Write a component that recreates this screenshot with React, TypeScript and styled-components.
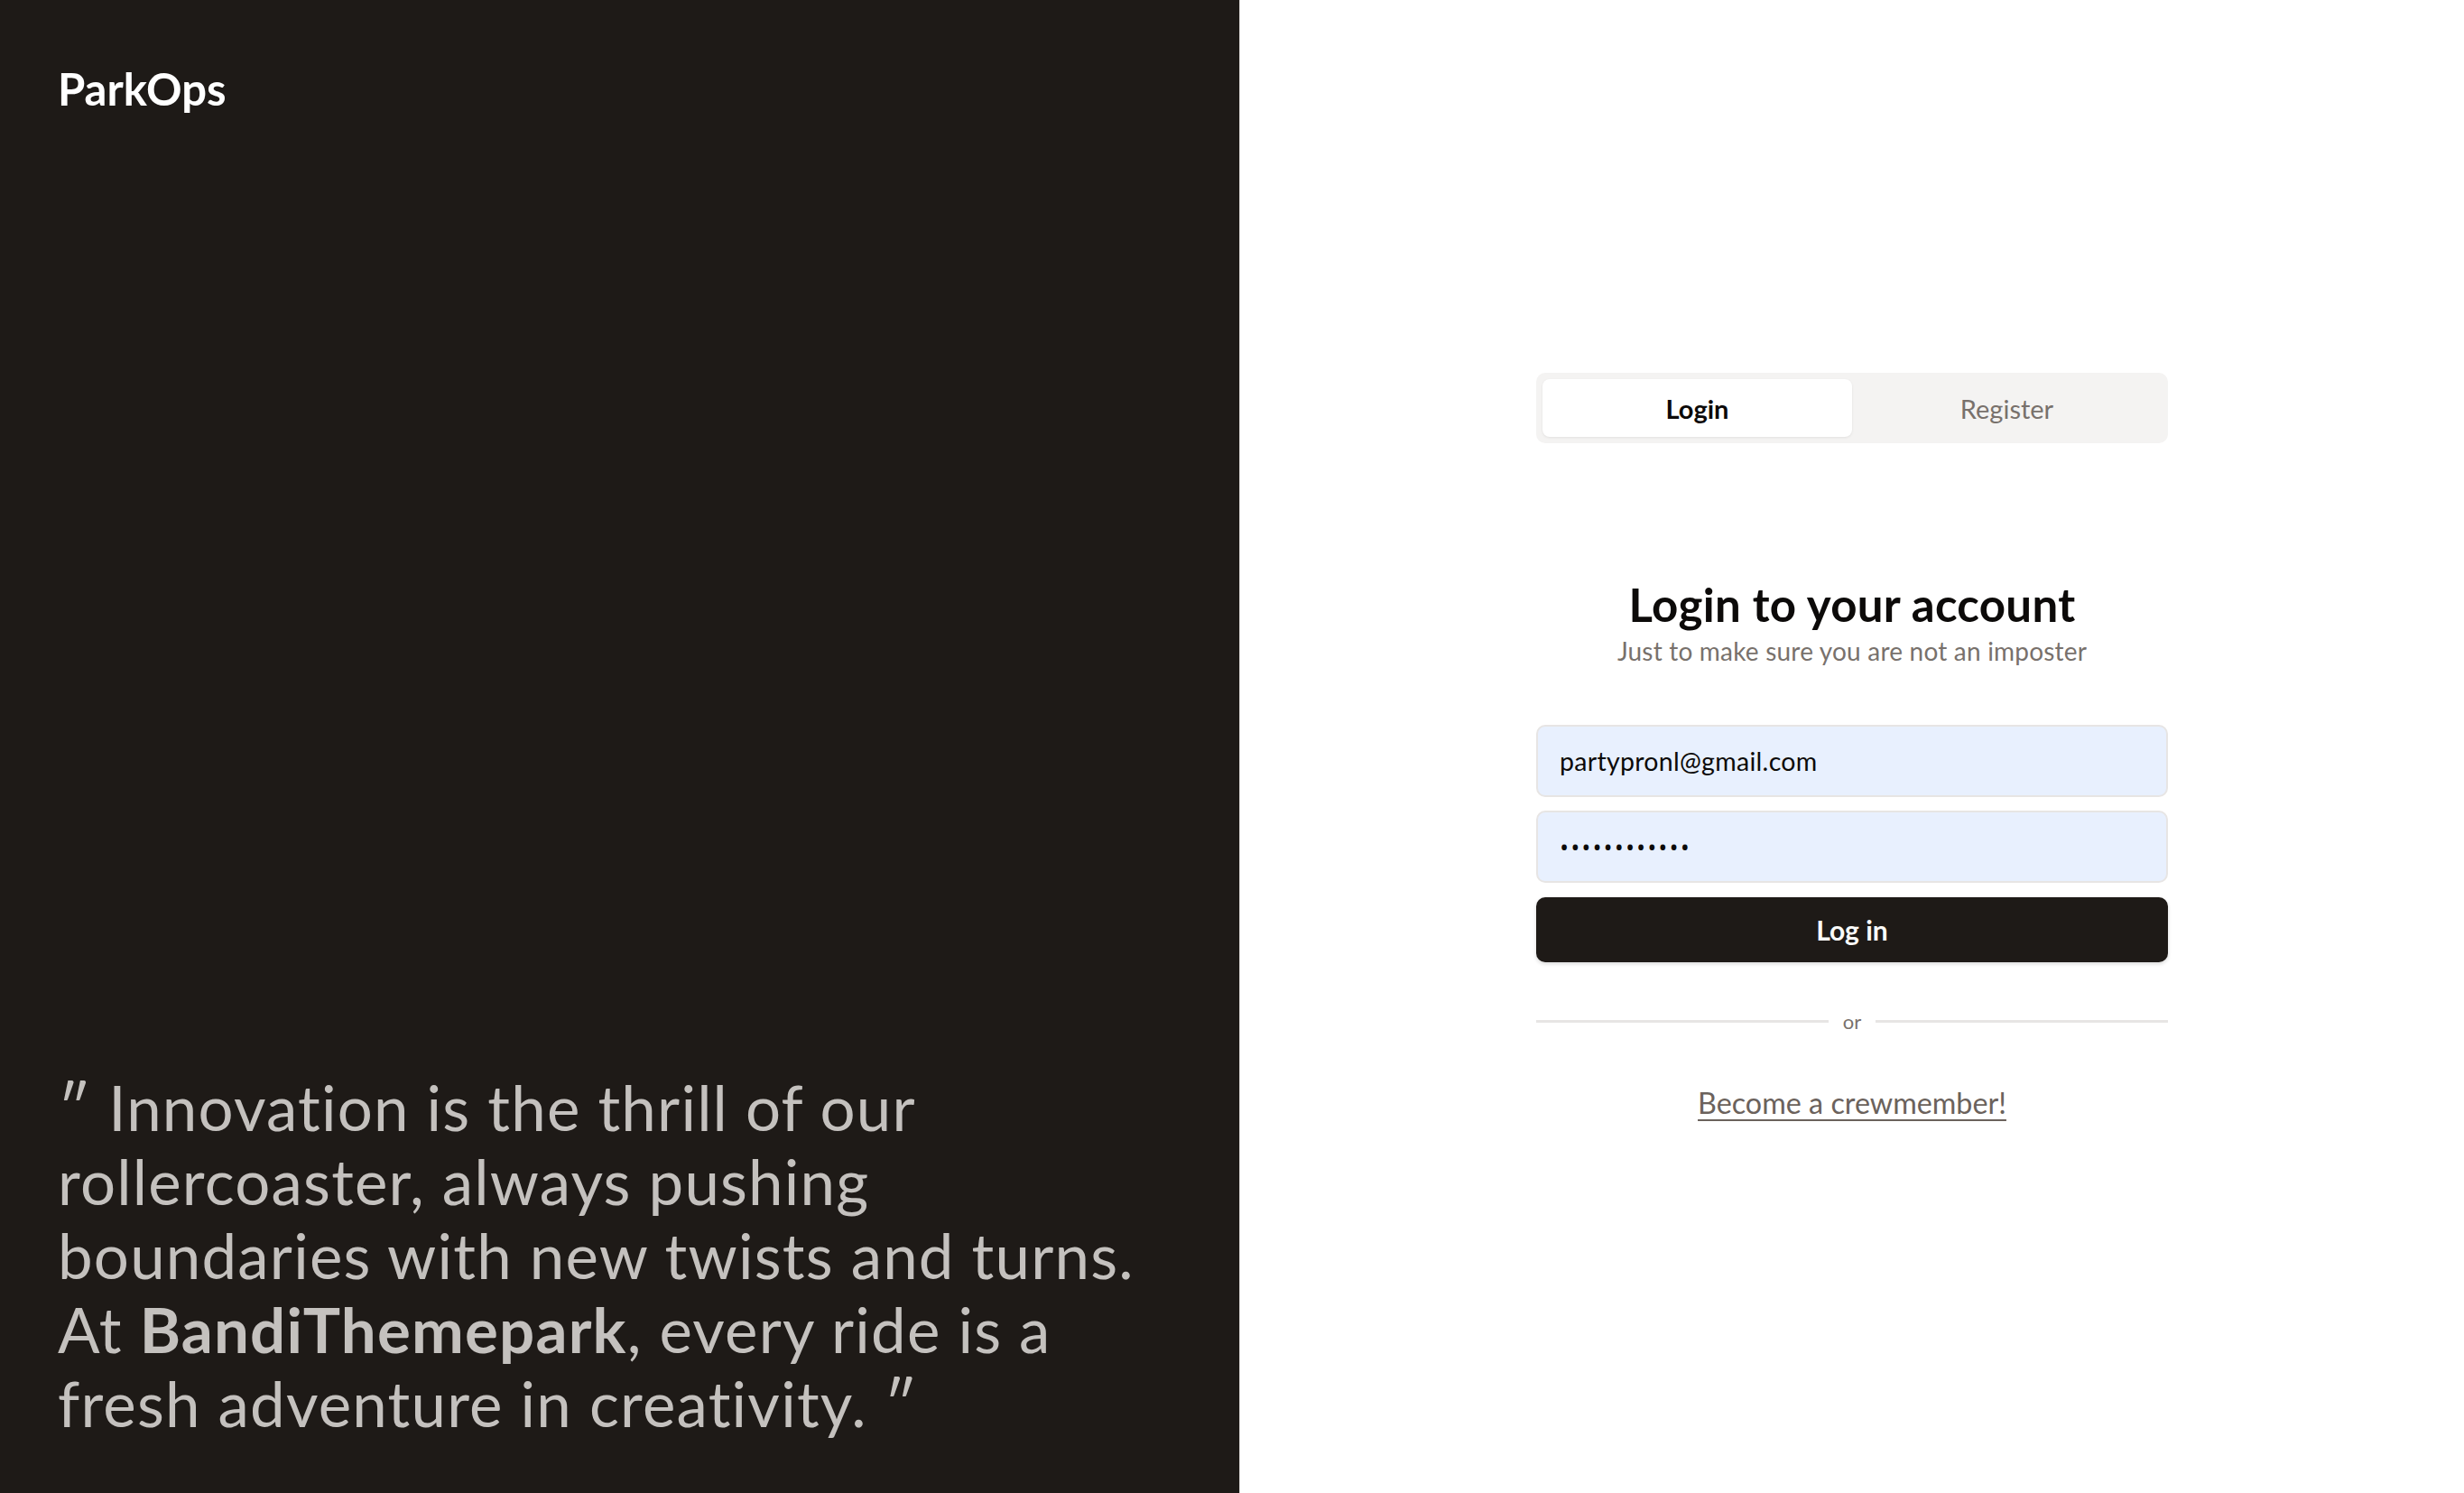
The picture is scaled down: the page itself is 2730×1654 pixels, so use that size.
import React from "react";
import styled, { createGlobalStyle } from "styled-components";

const Global = createGlobalStyle`
  html, body { margin: 0; padding: 0; }
  body {
    font-family: Lato, "Open Sans", sans-serif;
    background: #ffffff;
    font-variant-ligatures: none;
  }
  * { box-sizing: border-box; }
`;

const Page = styled.div`
  display: grid;
  grid-template-columns: 1374px 1fr;
  width: 100%;
  height: 1654px;
`;

const Side = styled.aside`
  background: #1e1a17;
  border-right: 1px solid #d6d3d1;
  display: flex;
  flex-direction: column;
  justify-content: space-between;
  padding: 68px 64px 58px 64px;
`;

const Brand = styled.div`
  color: #ffffff;
  font-size: 49px;
  font-weight: 700;
  line-height: 60px;
`;

const Quote = styled.blockquote`
  margin: 0;
  color: #c4c1be;
  font-size: 69px;
  font-weight: 400;
  line-height: 82px;
  letter-spacing: 1.2px;
`;

const Strong = styled.b`
  font-weight: 700;
`;

const Main = styled.main`
  display: flex;
  align-items: center;
  justify-content: center;
`;

const Column = styled.div`
  width: 700px;
  display: flex;
  flex-direction: column;
`;

const Tabs = styled.div`
  height: 78px;
  background: #f4f3f2;
  border-radius: 10px;
  padding: 7px;
  display: grid;
  grid-template-columns: 1fr 1fr;
`;

const Tab = styled.button<{ $active?: boolean }>`
  border: none;
  border-radius: 8px;
  font-family: inherit;
  font-size: 29px;
  font-weight: ${(p) => (p.$active ? 700 : 400)};
  color: ${(p) => (p.$active ? "#0c0a09" : "#78716c")};
  background: ${(p) => (p.$active ? "#ffffff" : "transparent")};
  box-shadow: ${(p) => (p.$active ? "0 1px 3px rgba(0,0,0,0.08)" : "none")};
`;

const Header = styled.div`
  margin-top: 150px;
  display: flex;
  flex-direction: column;
  align-items: center;
  gap: 4px;
`;

const Title = styled.h1`
  margin: 0;
  font-size: 51px;
  font-weight: 700;
  color: #0c0a09;
  line-height: 58px;
  letter-spacing: 0.3px;
`;

const Subtitle = styled.p`
  margin: 0;
  font-size: 28px;
  color: #78716c;
  line-height: 36px;
  letter-spacing: 0.2px;
`;

const Form = styled.form`
  margin-top: 64px;
  display: flex;
  flex-direction: column;
  gap: 15px;
`;

const Field = styled.input<{ $secret?: boolean }>`
  height: 80px;
  border: 2px solid #e7e5e4;
  border-radius: 10px;
  background: #e8f0fe;
  padding: 0 24px;
  font-family: ${(p) => (p.$secret ? '"Open Sans", sans-serif' : "inherit")};
  font-size: ${(p) => (p.$secret ? "27px" : "28.5px")};
  letter-spacing: ${(p) => (p.$secret ? "2px" : "0.3px")};
  color: #0c0a09;
  outline: none;
`;

const Submit = styled.button`
  height: 72px;
  margin-top: 1px;
  border: none;
  border-radius: 10px;
  background: #1e1a17;
  color: #fafaf9;
  font-family: inherit;
  font-size: 30px;
  font-weight: 700;
  box-shadow: 0 2px 4px rgba(0,0,0,0.15);
`;

const Divider = styled.div`
  margin-top: 52px;
  display: grid;
  grid-template-columns: 1fr auto 1fr;
  align-items: center;
  gap: 16px;
  color: #78716c;
  font-size: 22px;
  &::before, &::after {
    content: "";
    height: 3px;
    background: #e7e5e4;
  }
`;

const Link = styled.a`
  margin-top: 57px;
  align-self: center;
  color: #6b625c;
  font-size: 32.3px;
  text-decoration: underline;
  text-decoration-thickness: 2px;
  text-underline-offset: 6px;
`;

export default function App() {
  return (
    <>
      <Global />
      <Page>
        <Side>
          <Brand>ParkOps</Brand>
          <Quote>
            ″ Innovation is the thrill of our<br />
            rollercoaster, always pushing<br />
            boundaries with new twists and turns.<br />
            At <Strong>BandiThemepark</Strong>, every ride is a<br />
            fresh adventure in creativity. ″
          </Quote>
        </Side>
        <Main>
          <Column>
            <Tabs>
              <Tab $active>Login</Tab>
              <Tab>Register</Tab>
            </Tabs>
            <Header>
              <Title>Login to your account</Title>
              <Subtitle>Just to make sure you are not an imposter</Subtitle>
            </Header>
            <Form onSubmit={(e) => e.preventDefault()}>
              <Field type="email" defaultValue="partypronl@gmail.com" />
              <Field $secret type="password" defaultValue="partypronl12" />
              <Submit type="submit">Log in</Submit>
            </Form>
            <Divider>or</Divider>
            <Link href="#">Become a crewmember!</Link>
          </Column>
        </Main>
      </Page>
    </>
  );
}
